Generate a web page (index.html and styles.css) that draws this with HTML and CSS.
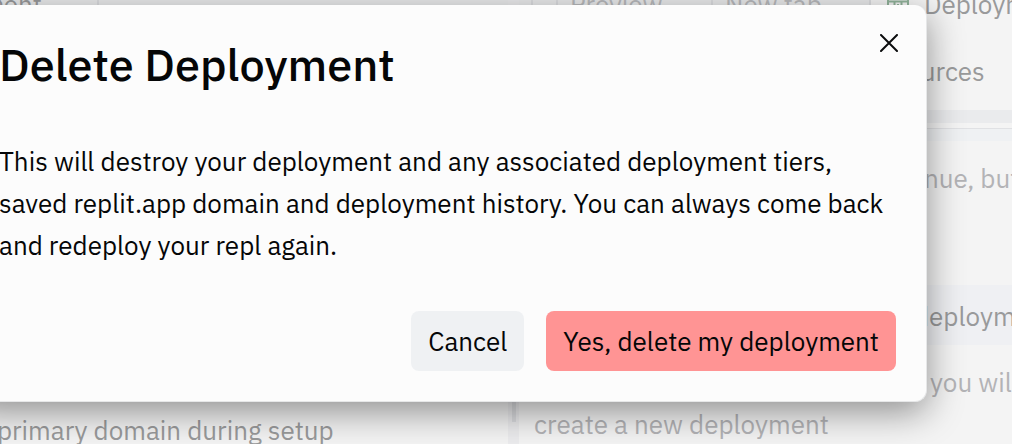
FILE: index.html
```html
<!DOCTYPE html>
<html lang="en">
<head>
<meta charset="utf-8">
<title>Delete Deployment</title>
<link rel="stylesheet" href="styles.css">
</head>
<body>
<main class="workspace">
  <section class="pane pane-left">
    <header class="tabs"><span class="tab tab-agent">Agent</span></header>
    <p class="setup-note">primary domain during setup</p>
  </section>
  <div class="gutter"><span class="gutter-grip"></span></div>
  <section class="pane">
    <header class="tabs">
      <span class="tab tab-stub"></span>
      <span class="tab tab-stub-wide"></span>
      <span class="tab tab-preview">Preview</span>
      <span class="tab tab-new">New tab</span>
      <span class="tab tab-active">
        <svg class="tab-icon" viewBox="0 0 22 22" fill="none" stroke="#92b49b" stroke-width="2" aria-hidden="true"><path d="M1 1V21H21V1ZM0 8.500H22M7.500 9V17M14.500 9V17M11 11V13"/></svg>
        <span>Deployments</span>
      </span>
    </header>
    <div class="subnav">Resources</div>
    <div class="band"></div>
    <div class="band-light"></div>
    <p class="notice">continue, but</p>
    <div class="row">deployments</div>
    <p class="hint"><span class="hint-end">you will</span><span>create a new deployment</span></p>
  </section>
</main>

<div class="dialog" role="dialog" aria-modal="true" aria-labelledby="dialog-title">
  <div class="dialog-head">
    <h1 class="dialog-title" id="dialog-title">Delete Deployment</h1>
    <button class="close" type="button" aria-label="Close">
      <svg class="close-icon" viewBox="0 0 18 18" fill="none" stroke="#0b0c0d" stroke-width="2" stroke-linecap="round" aria-hidden="true"><path d="M1 1L17 17M17 1L1 17"/></svg>
    </button>
  </div>
  <p class="dialog-text">This will destroy your deployment and any associated deployment tiers, saved replit.app domain and deployment history. You can always come back and redeploy your repl again.</p>
  <div class="actions">
    <button class="button" type="button">Cancel</button>
    <button class="button button-danger" type="button">Yes, delete my deployment</button>
  </div>
</div>
</body>
</html>
```
FILE: styles.css
```css
* { box-sizing: border-box; }

body {
  margin: 0;
  height: 100vh;
  overflow: hidden;
  position: relative;
  background: #f4f4f4;
  color: #050607;
  font-family: "IBM Plex Sans", "Noto Sans", sans-serif;
  font-size: 26px;
  line-height: 42px;
}

h1, p { margin: 0; }

.workspace {
  display: grid;
  grid-template-columns: 508fr 11px 493fr;
  height: 100%;
  color: #999a9b;
  white-space: nowrap;
}

.pane {
  min-width: 0;
  display: flex;
  flex-direction: column;
  overflow: hidden;
}

.pane > * { flex-shrink: 0; }

.pane-left { justify-content: space-between; }

.tabs {
  display: flex;
  height: 8px;
  background: #eaebec;
}

.tab {
  display: flex;
  align-items: center;
  flex: none;
  border-right: 2px solid #dcdde0;
}

.tab-agent {
  width: 99px;
  padding-right: 55px;
  justify-content: flex-end;
}

.tab-stub { width: 14px; }
.tab-stub-wide { width: 25px; }

.tab-preview,
.tab-new {
  width: 155px;
  padding-left: 12px;
  color: #b9babd;
}

.tab-new { width: 158px; }

.tab-active {
  flex: 1;
  gap: 15px;
  padding-left: 16px;
  border: 0;
  background: #f4f4f4;
}

.tab-icon { width: 22px; height: 22px; flex: none; }

.setup-note { margin: 0 0 -7px -3px; }

.gutter {
  display: flex;
  align-items: flex-end;
  justify-content: center;
  padding-bottom: 22px;
  background: #ececee;
}

.gutter-grip {
  width: 4px;
  height: 200px;
  background: #dcdde0;
}

.subnav {
  padding: 42px 0 18px 344px;
}

.band { height: 13px; background: #eaebed; }

.band-light {
  height: 13px;
  margin-top: 5px;
  border-top: 1px solid #e0e1e4;
  background: #eff1f3;
}

.notice {
  padding: 16px 0 86px 347px;
  color: #b3b3b6;
}

.row {
  padding: 10px 0 8px 395px;
  background: #eff0f3;
}

.hint {
  display: flex;
  flex-direction: column;
  padding: 16px 0 0 15px;
  color: #b3b3b6;
}

.hint-end { padding-left: 396px; }

.dialog {
  position: absolute;
  top: 5px;
  right: 85px;
  left: -32px;
  padding: 28px 30px 30px;
  border: 1px solid #e6e7e8;
  border-top: 0;
  border-radius: 12px;
  background: #fcfcfc;
  box-shadow: 0 10px 36px rgba(0, 0, 0, 0.42);
}

.dialog-head {
  display: flex;
  justify-content: space-between;
  align-items: flex-start;
}

.dialog-title {
  font-size: 45px;
  font-weight: 500;
  line-height: 62px;
}

.close {
  display: flex;
  margin: 1px -2px 0 0;
  padding: 0;
  border: 0;
  background: none;
}

.close-icon { width: 18px; height: 18px; }

.dialog-text { margin: 45px 0; }

.actions {
  display: flex;
  justify-content: flex-end;
  gap: 22px;
}

.button {
  height: 60px;
  padding: 0 17px;
  border: 0;
  border-radius: 8px;
  background: #eff1f3;
  color: inherit;
  font: inherit;
}

.button-danger { background: #ff9494; }
```
